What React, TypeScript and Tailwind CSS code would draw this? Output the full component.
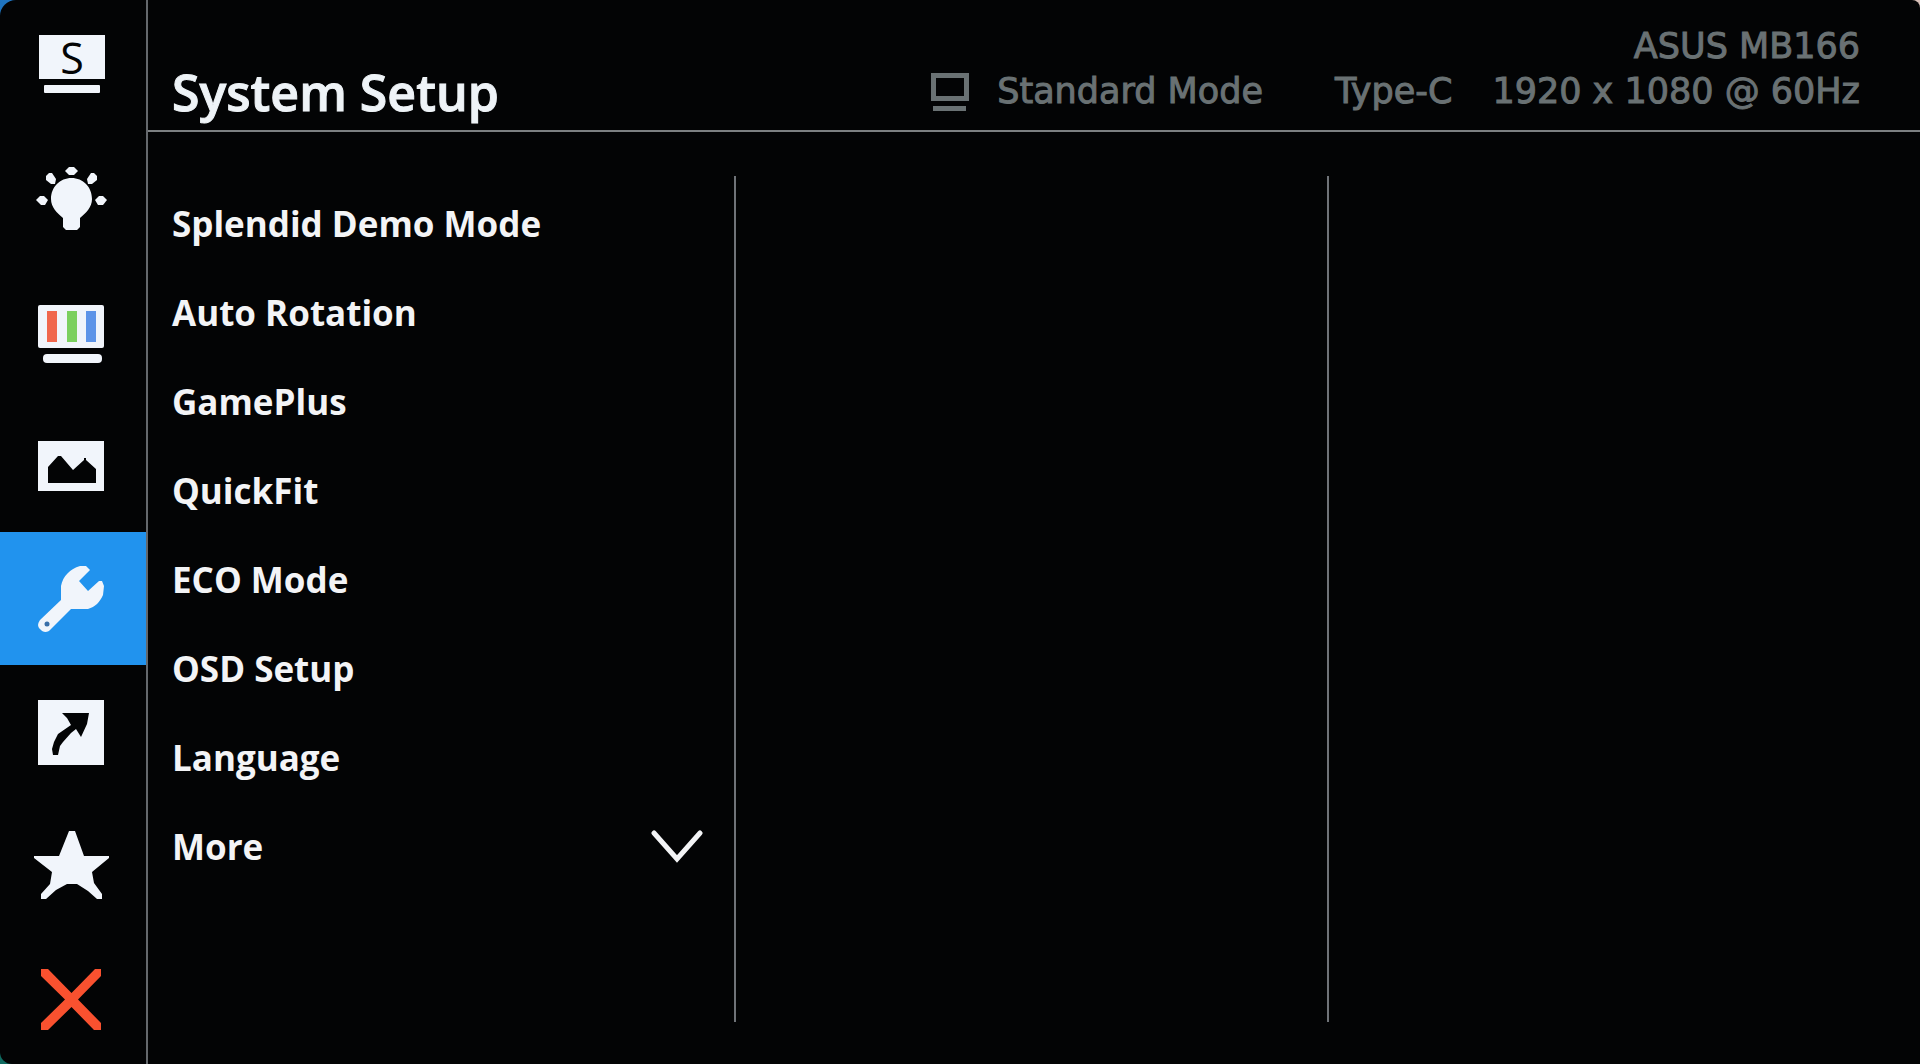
import React from 'react';

interface Section {
  id: string;
  label: string;
  icon: React.ReactNode;
}

const sections: Section[] = [
  {
    id: 'splendid',
    label: 'Splendid',
    icon: (
      <>
        <rect x="39" y="35" width="66" height="44" />
        <rect x="44" y="85" width="56" height="8" rx="1" />
        <text x="72" y="74" textAnchor="middle" className="fill-[#030405] font-['Open_Sans',sans-serif] text-[43px]">
          S
        </text>
      </>
    ),
  },
  {
    id: 'blue-light',
    label: 'Blue Light Filter',
    icon: (
      <>
        <path d="M71.5 45C83 45 92 54 92 66C92 74 86 80 80 85V94L77 97H66L63 94V85C57 80 51 74 51 66C51 54 60 45 71.5 45Z" />
        <path d="M65 38L69 34H74L78 38L74 42H69Z" />
        <path d="M46 43L49 40H52L56 46L55 51H51L46 47Z" />
        <path d="M97 43L94 40H91L87 46L88 51H92L97 47Z" />
        <path d="M36 67L40 63H44L48 67L45 72H41Z" />
        <path d="M95 67L99 63H103L107 67L103 72H98Z" />
      </>
    ),
  },
  {
    id: 'color',
    label: 'Color',
    icon: (
      <>
        <rect x="38" y="39" width="66" height="43" rx="2" />
        <rect x="47" y="45" width="10" height="31" fill="#f0674d" />
        <rect x="67" y="45" width="10" height="31" fill="#7bd05f" />
        <rect x="86" y="45" width="10" height="31" fill="#5d94e8" />
        <rect x="43" y="88" width="59" height="9" rx="4" />
      </>
    ),
  },
  {
    id: 'image',
    label: 'Image',
    icon: (
      <>
        <rect x="38" y="42" width="66" height="50" />
        <path d="M48 68L58 57H61L73 71L84 61V59H86V61L96 70V84H48Z" fill="#030405" />
      </>
    ),
  },
  {
    id: 'system',
    label: 'System Setup',
    icon: (
      <>
        <path d="M80 34H86L90 38L79 49L88 59L99 49H102L104 54L103 63C100 70 95 75 88 77H71L51 97C48 101 43 101 40 97C37 94 38 91 40 88L61 68V54C63 44 70 37 80 34Z" />
        <circle cx="47" cy="92" r="2.5" fill="#3a6fa8" />
      </>
    ),
  },
  {
    id: 'shortcut',
    label: 'Shortcut',
    icon: (
      <>
        <rect x="38" y="35" width="66" height="65" />
        <path d="M62 48H89L87 59L81 72L76 64L71 68L63 77L60 81L58 90H53L52 84L54 77L58 69L71 60L67 53Z" fill="#030405" />
      </>
    ),
  },
  {
    id: 'favorite',
    label: 'MyFavorite',
    icon: (
      <path d="M69 33H75L84 58H109V60L92 74L94 85L102 96V101H97L88 93L77 86H67L56 92L46 101H41V96L50 86L52 74L34 60V58H59Z" />
    ),
  },
  {
    id: 'exit',
    label: 'Exit',
    icon: <path d="M41 38H48L71.5 62L95 38H101V45L78 68.5L101 92V99H94L71.5 76L48 99H41V92L65 68.5L41 45Z" fill="#f9512f" />,
  },
];

const menuItems = [
  'Splendid Demo Mode',
  'Auto Rotation',
  'GamePlus',
  'QuickFit',
  'ECO Mode',
  'OSD Setup',
  'Language',
  'More',
];

const Sidebar: React.FC<{ active: string }> = ({ active }) => (
  <nav className="flex w-[148px] shrink-0 flex-col border-r-2 border-[#64686c]" aria-label="Sections">
    {sections.map((section) => (
      <button
        key={section.id}
        type="button"
        aria-label={section.label}
        className={`flex min-h-[100px] flex-1 items-center justify-center ${section.id === active ? 'bg-[#2193ee]' : ''}`}
      >
        <svg viewBox="0 0 146 133" width="146" height="133" className="fill-[#f1f5fb]" aria-hidden="true">
          {section.icon}
        </svg>
      </button>
    ))}
  </nav>
);

const Header: React.FC = () => (
  <header className="flex items-end justify-between border-b-2 border-[#7c8082] pt-6 pr-[60px] pb-4 pl-6">
    <h1 className="font-['Open_Sans',sans-serif] text-[50px] leading-[44px] font-semibold text-[#eef3f7] [-webkit-text-stroke:1px]">
      System Setup
    </h1>
    <div className="text-right font-['DejaVu_Sans',sans-serif] text-[35px] leading-[45px] text-[#697173] [-webkit-text-stroke:1px]">
      <p>ASUS MB166</p>
      <div className="flex items-center">
        <svg viewBox="0 0 38 38" width="38" height="38" className="mr-7" aria-hidden="true">
          <rect x="2.5" y="2.5" width="33" height="23" fill="none" stroke="currentColor" strokeWidth="5" />
          <rect x="2" y="33" width="33" height="5" fill="currentColor" />
        </svg>
        <span className="mr-[72px]">Standard Mode</span>
        <span className="mr-10">Type-C</span>
        <span>1920 x 1080 @ 60Hz</span>
      </div>
    </div>
  </header>
);

const Menu: React.FC = () => (
  <ul className="flex flex-col pt-[3px]">
    {menuItems.map((item) => (
      <li key={item}>
        <button
          type="button"
          className="flex h-[89px] w-full items-center justify-between pr-[31px] pl-6 text-left font-['Open_Sans',sans-serif] text-[35px] leading-[45px] font-bold text-[#f3f4f6]"
        >
          {item}
          {item === 'More' && (
            <svg viewBox="0 0 52 34" width="52" height="34" fill="none" stroke="currentColor" strokeWidth="5" strokeLinecap="round" aria-hidden="true">
              <path d="M3 3L26 29L49 3" />
            </svg>
          )}
        </button>
      </li>
    ))}
  </ul>
);

const App: React.FC = () => (
  <div className="min-h-screen bg-linear-to-bl from-[#d8c0b8] via-[#1f74c0] to-[#0f6b60]">
    <div className="flex min-h-screen rounded-tl-[16px] rounded-tr-[8px] rounded-bl-[12px] bg-[#030405]">
      <Sidebar active="system" />
      <main className="flex min-w-0 flex-1 flex-col">
        <Header />
        <div className="grid flex-1 grid-cols-[588fr_593fr_591fr] pt-11 pb-[42px]">
          <section className="border-r-2 border-[#6f7378]">
            <Menu />
          </section>
          <section className="border-r-2 border-[#6f7378]" />
          <section />
        </div>
      </main>
    </div>
  </div>
);

export default App;
